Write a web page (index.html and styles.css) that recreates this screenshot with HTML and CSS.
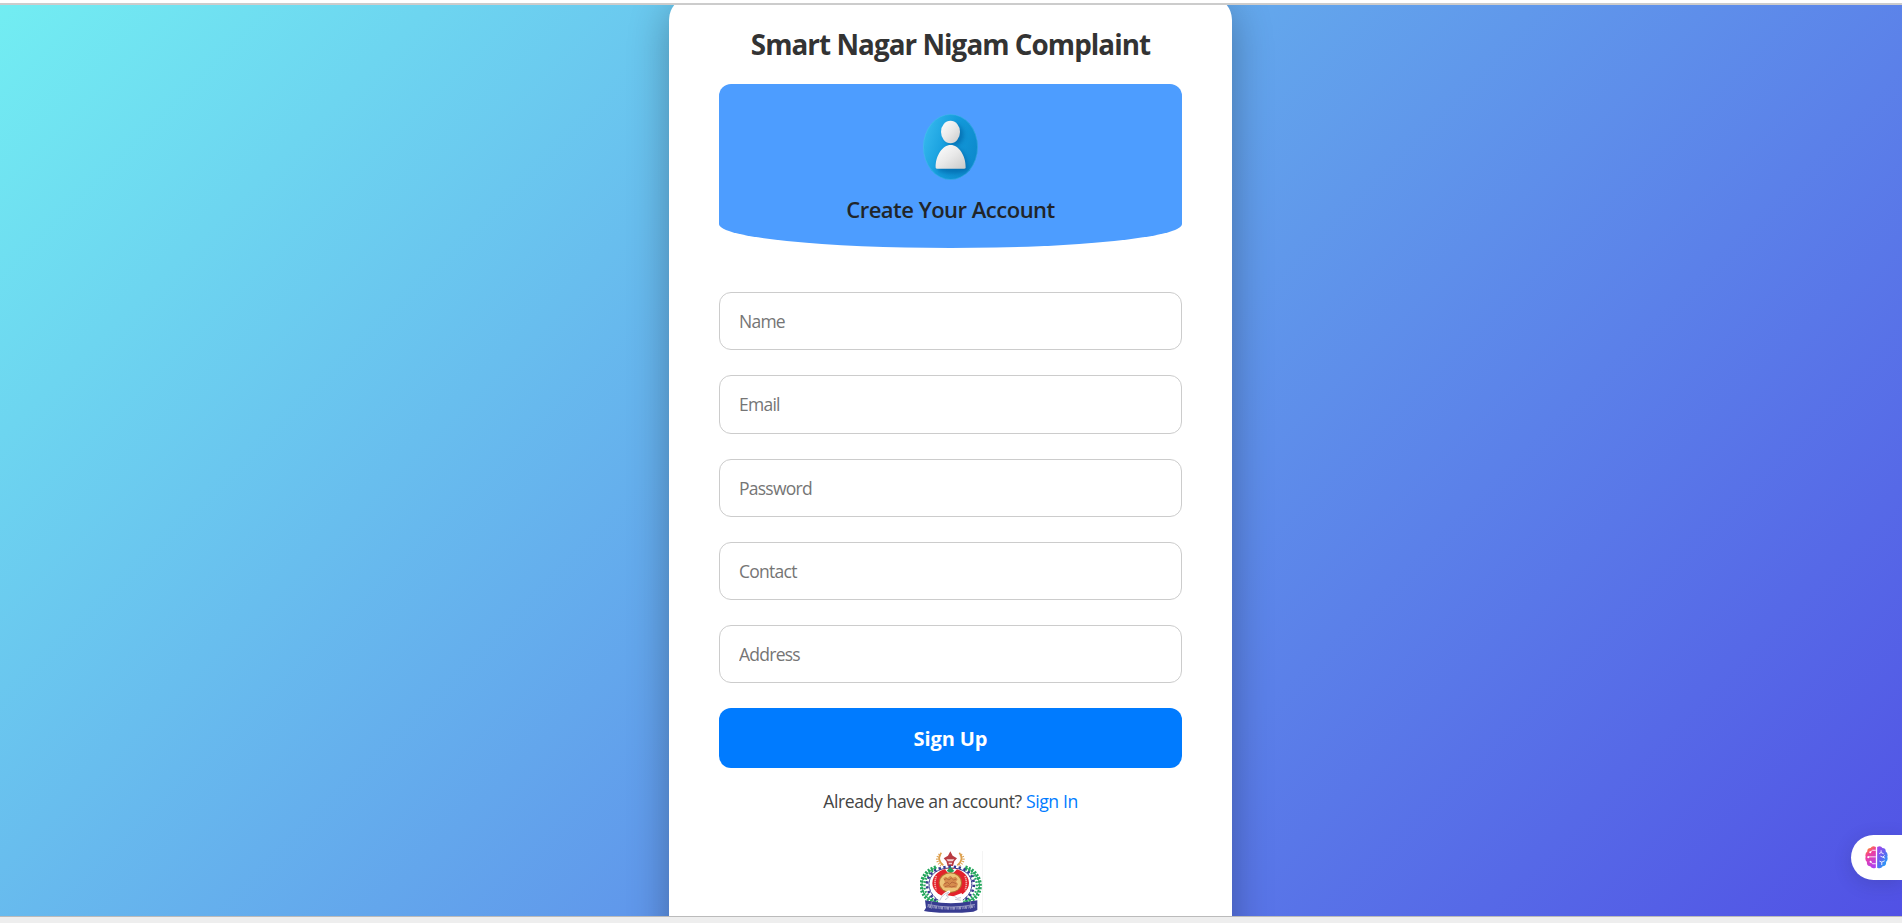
FILE: index.html
```html
<!DOCTYPE html>
<html lang="en">
<head>
<meta charset="utf-8">
<title>Smart Nagar Nigam Complaint</title>
<link rel="stylesheet" href="styles.css">
</head>
<body>
<div class="top-edge"></div>
<main class="page">
  <section class="card">
    <h1 class="title"><span>Smart Nagar Nigam Complaint</span></h1>
    <div class="banner">
      <svg class="avatar" viewBox="0 0 165 198" preserveAspectRatio="none">
        <defs>
          <linearGradient id="disc" x1="0" y1="0.3" x2="1" y2="0.7"><stop offset="0" stop-color="#35b8ee"/><stop offset=".45" stop-color="#149cdc"/><stop offset="1" stop-color="#0c88cb"/></linearGradient>
          <linearGradient id="figure" x1="0" y1="0" x2="1" y2="1"><stop offset="0" stop-color="#fff"/><stop offset=".5" stop-color="#e9e9e9"/><stop offset="1" stop-color="#c9c9c9"/></linearGradient>
          <filter id="soft" x="-50%" y="-50%" width="200%" height="200%"><feGaussianBlur stdDeviation="7"/></filter>
          <clipPath id="discClip"><ellipse cx="82.500" cy="99" rx="82" ry="98.500"/></clipPath>
        </defs>
        <ellipse cx="82.500" cy="99" rx="82" ry="98.500" fill="url(#disc)"/>
        <g clip-path="url(#discClip)">
          <g filter="url(#soft)" fill="#0462a5" opacity=".65">
            <ellipse cx="94" cy="62" rx="28" ry="33"/>
            <path d="M44 170C45 125 66 100 91 100S134 130 136 170Q88 188 44 170Z"/>
          </g>
        </g>
        <ellipse cx="82.500" cy="99" rx="81" ry="97.500" fill="none" stroke="#5cc5f0" stroke-opacity=".5" stroke-width="2"/>
        <ellipse cx="82.500" cy="54" rx="28.500" ry="33.500" fill="url(#figure)"/>
        <path d="M38 161C37 125 59 93 83 93S129 125 128 161Q128 164 123 164H43Q38 164 38 161Z" fill="url(#figure)"/>
      </svg>
      <h2 class="subtitle"><span>Create Your Account</span></h2>
    </div>
    <form class="form">
      <input class="field" type="text" placeholder="Name">
      <input class="field" type="text" placeholder="Email">
      <input class="field" type="password" placeholder="Password">
      <input class="field" type="text" placeholder="Contact">
      <input class="field" type="text" placeholder="Address">
      <button class="submit" type="button"><span>Sign Up</span></button>
    </form>
    <p class="switch"><span>Already have an account? <a class="link" href="#">Sign In</a></span></p>
    <svg class="emblem" viewBox="57 33 189 186">
      <path d="M244.500 33V219" stroke="#eee" stroke-width="2"/>
      <!-- sun rays beside the lamp -->
      <g fill="none" stroke="#dda04e">
        <path d="M121 38Q105 57 127 76M175 38Q191 57 169 76" stroke-width="5"/>
        <path d="M117 44Q101 59 121 76M179 44Q195 59 175 76" stroke-width="10" stroke-dasharray="3 4"/>
      </g>
      <path d="M148 34L155 47L168 55L160 64L156 78H140L136 64L128 55L141 47Z" fill="#b93b42"/>
      <path d="M136 58H160L155 64H141ZM143 68H153V73H143Z" fill="#f4d4d2"/>
      <!-- laurel wreath -->
      <g fill="none" stroke="#23a65c">
        <path d="M107 83C73 92 55 125 66 154C73 173 91 184 111 187M191 83C225 92 243 125 232 154C225 173 207 184 187 187" stroke-width="3"/>
        <path d="M105 82C71 91 53 125 64 155C72 176 90 186 111 187M193 82C227 91 245 125 234 155C226 176 208 186 187 187" stroke-width="11" stroke-dasharray="6 4"/>
        <path d="M105 88C80 97 65 125 72 151C80 170 95 179 111 184M193 88C218 97 233 125 226 151C218 170 203 179 187 184" stroke-width="7" stroke-dasharray="5 5"/>
      </g>
      <!-- cog wheel -->
      <path d="M112 180C69 153 72 85 148 84S228 153 185 180" fill="none" stroke="#373b8f" stroke-width="3"/>
      <path d="M106 181C61 153 67 81 148 80S236 153 190 181" fill="none" stroke="#373b8f" stroke-width="8" stroke-dasharray="7 8"/>
      <path d="M112 176C75 153 77 90 148 89S222 153 185 176" fill="none" stroke="#fff" stroke-width="5" stroke-dasharray="7 6"/>
      <ellipse cx="149" cy="129" rx="55" ry="44" fill="#e3222c"/>
      <path d="M106 108Q98 130 106 151M192 108Q200 130 192 151" fill="none" stroke="#efaaa6" stroke-width="5" stroke-dasharray="4 2"/>
      <path d="M132 88L141 86L150 90L160 86L168 88L158 98H140Z" fill="#fff"/>
      <path d="M137 93L148 80L160 93L149 99Z" fill="#1f9c56"/>
      <ellipse cx="148" cy="128" rx="35" ry="31" fill="#b56b2d"/>
      <ellipse cx="148" cy="128" rx="32" ry="28" fill="#edc478"/>
      <path d="M127 115L134 110L140 114L148 107L155 113L164 110L170 118L165 125L171 132L166 143H131L125 135L132 127Z" fill="#d68c4d"/>
      <path d="M129 119L137 116L144 120L151 114L158 120L166 117M129 132L139 127L146 133L153 126L166 131M132 140L142 137L151 141L164 138" fill="none" stroke="#a65532" stroke-width="2"/>
      <!-- clasped hands -->
      <path d="M113 183C119 167 129 157 145 151L148 157L139 166L157 169L182 159L186 181L158 186H113Z" fill="#fff"/>
      <path d="M116 182Q124 162 143 157L136 167Q149 171 132 179M160 169Q168 179 180 173M162 178L180 181" fill="none" stroke="#a6a7bd" stroke-width="2"/>
      <!-- ribbon -->
      <path d="M72 181L91 184Q149 196 209 184L229 181V210L217 215Q149 222 82 215L69 213L75 203Z" fill="#373b91"/>
      <path d="M91 184V207M209 184V207" stroke="#9294bd" stroke-width="2"/>
      <path d="M80 193Q149 209 222 193" fill="none" stroke="#b8b9d4" stroke-width="2"/>
      <path d="M80 198Q149 212 222 198" fill="none" stroke="#a5a6ca" stroke-width="8" stroke-dasharray="3 2 5 3 2 3"/>
    </svg>
  </section>
  <aside class="assistant">
    <svg class="brain" viewBox="0 0 70 70">
      <defs>
        <linearGradient id="brainLeft" x1=".2" y1="0" x2=".6" y2="1"><stop offset="0" stop-color="#ff9a16"/><stop offset=".35" stop-color="#f13d99"/><stop offset="1" stop-color="#b141ee"/></linearGradient>
        <linearGradient id="brainRight" x1="0" y1="0" x2=".8" y2="1"><stop offset="0" stop-color="#b040ea"/><stop offset=".5" stop-color="#6362ef"/><stop offset="1" stop-color="#19aaf8"/></linearGradient>
      </defs>
      <path d="M33 3Q22-2 17 6Q6 6 7 17Q-1 23 2 33Q-1 43 6 49Q4 60 16 62Q22 71 33 66Z" fill="url(#brainLeft)"/>
      <path d="M37 3Q48-2 53 6Q64 6 63 17Q71 23 68 33Q71 43 64 49Q66 60 54 62Q48 71 37 66Z" fill="url(#brainRight)"/>
      <g fill="none" stroke="#fff" stroke-width="2.600">
        <path d="M33 13H23L16 19M8 33H33M33 54H23L17 48"/>
        <path d="M49 13V20L43 23M49 20L57 24M60 29L54 34L61 37M54 34L47 31M44 46L51 49L60 45M51 49V58"/>
      </g>
      <g fill="#fff"><circle cx="16" cy="19" r="3"/><circle cx="10" cy="34" r="3"/><circle cx="17" cy="48" r="3"/></g>
    </svg>
  </aside>
</main>
<div class="bottom-edge"></div>
</body>
</html>
```
FILE: styles.css
```css
* { box-sizing: border-box; }
body {
  margin: 0;
  height: 923px;
  overflow: hidden;
  display: flex;
  flex-direction: column;
  font-family: "Open Sans", "Noto Sans", sans-serif;
}
.top-edge { height: 5px; flex: none; background: #fff; border-bottom: 2px solid #ccc; }
.bottom-edge { height: 7px; flex: none; background: #eee; border-top: 1px solid #bbb; }
.page {
  position: relative;
  flex: 1;
  overflow: hidden;
  display: flex;
  justify-content: center;
  align-items: flex-start;
  background: linear-gradient(135deg, #72edf2, #5151e5);
}
.card {
  width: 563px;
  height: 980px;
  flex: none;
  margin: -9px 1px 0 0;
  padding: 29px 50px;
  display: flex;
  flex-direction: column;
  align-items: center;
  background: #fff;
  border-radius: 24px;
  box-shadow: 0 10px 40px rgba(0, 0, 0, .3);
}
.title { margin: 0 0 21px; font-size: 27.800px; font-weight: 700; line-height: 38px; letter-spacing: -.95px; color: #333; white-space: nowrap; }
.banner {
  width: 100%;
  height: 164px;
  padding-top: 30px;
  display: flex;
  flex-direction: column;
  align-items: center;
  background: #4d9dff;
  border-radius: 12px 12px 50% 50% / 12px 12px 24px 24px;
}
.avatar { width: 55px; height: 66px; display: block; }
.subtitle { margin: 13px 0 0; font-size: 22px; font-weight: 600; line-height: 32px; letter-spacing: -.5px; color: #212529; white-space: nowrap; }
.form { width: 100%; margin: 44px 0 0; display: flex; flex-direction: column; gap: 25px; }
.field {
  width: 100%;
  height: 58.250px;
  padding: 0 19px;
  font: 400 17.500px "Open Sans", "Noto Sans", sans-serif;
  letter-spacing: -.75px;
  color: #333;
  background: #fff;
  border: 1px solid #ccc;
  border-radius: 12px;
}
.field::placeholder { color: #757575; opacity: 1; }
.submit {
  height: 60px;
  border: 0;
  border-radius: 12px;
  background: #007bff;
  color: #fff;
  font: 700 20px "Open Sans", "Noto Sans", sans-serif;
  letter-spacing: -.1px;
}
.switch { margin: 20px 0 0; font-size: 17.600px; line-height: 26px; letter-spacing: -.4px; color: #444; white-space: nowrap; }
.link { color: #007bff; text-decoration: none; }
.emblem { width: 63px; height: 62px; flex: none; margin: 37px 0 0 1px; display: block; }
.assistant {
  position: absolute;
  right: 0;
  top: 830px;
  width: 51px;
  height: 45px;
  display: flex;
  align-items: center;
  padding-left: 14px;
  border-radius: 23px 0 0 23px;
  background: #fff;
  box-shadow: 0 4px 18px rgba(40, 40, 90, .2);
}
.brain { width: 23px; height: 23px; }
```
